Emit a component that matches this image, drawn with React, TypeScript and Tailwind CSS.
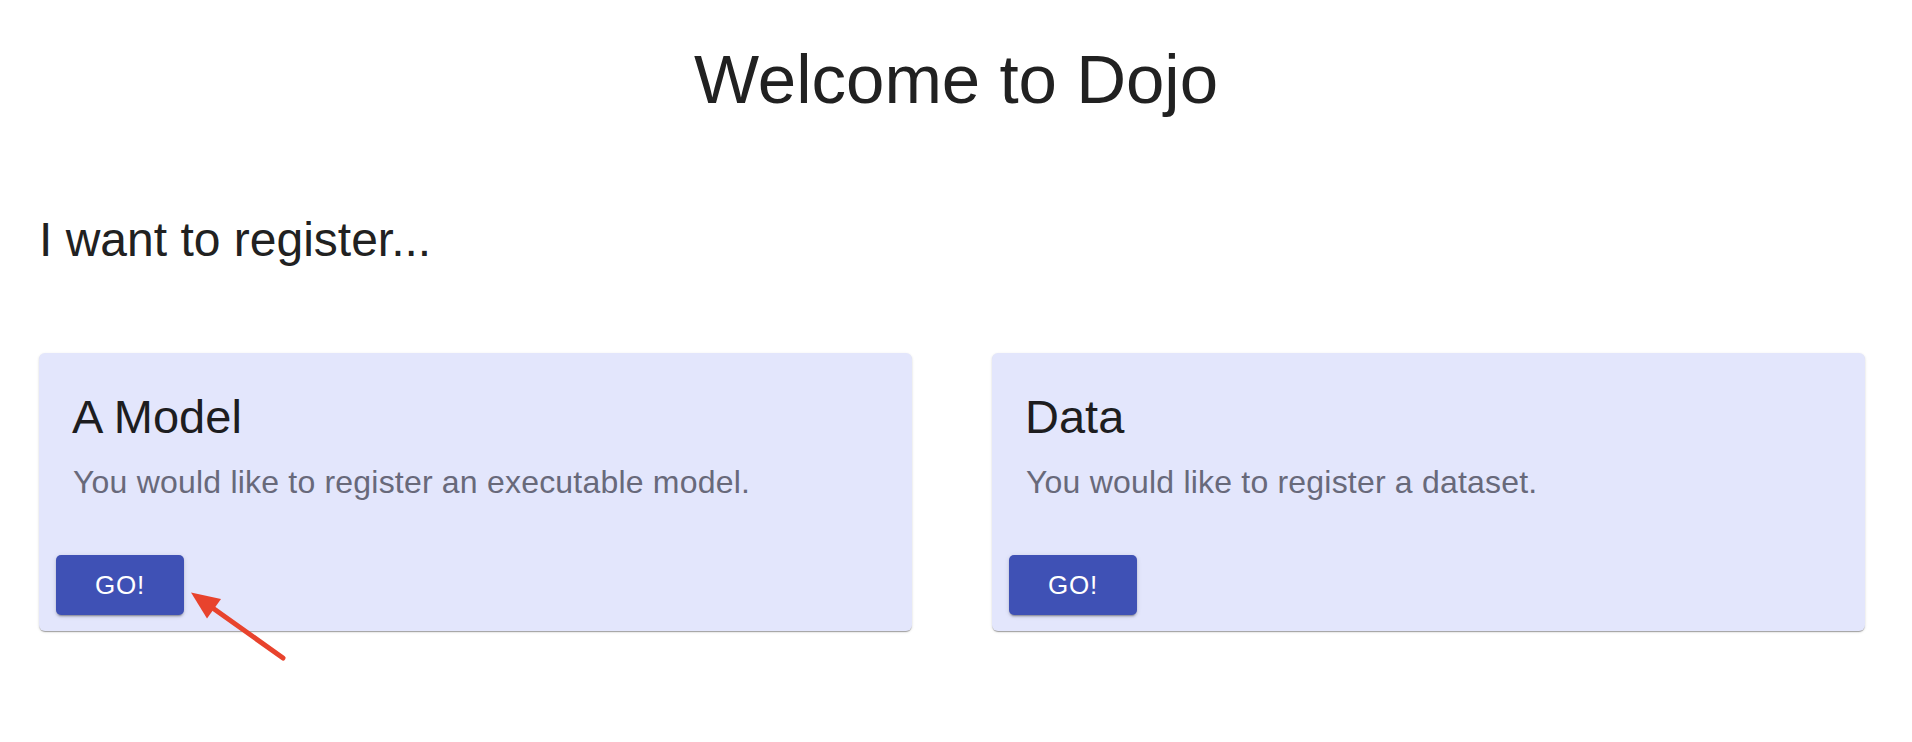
import React from 'react';

const options = [
  { title: 'A Model', text: 'You would like to register an executable model.' },
  { title: 'Data', text: 'You would like to register a dataset.' },
];

const App = () => {
  return (
    <div className="relative w-full h-[742px] bg-white text-[#212121] font-['Liberation_Sans',Arial,sans-serif] overflow-hidden">
      {/* Heading */}
      <h1 className="pt-[45px] text-center text-[69px] leading-[70px] font-normal">Welcome to Dojo</h1>

      <div className="pl-[39px] pr-[47px]">
        <h2 className="mt-[101px] text-[48px] leading-[48px] font-normal">I want to register...</h2>

        {/* Option cards */}
        <div className="mt-[89px] grid grid-cols-2 gap-[80px]">
          {options.map((opt) => (
            <div
              key={opt.title}
              className="h-[278px] flex flex-col bg-[#e3e6fc] rounded-[6px] shadow-[0_2px_1px_-1px_rgba(0,0,0,0.2),0_1px_1px_0_rgba(0,0,0,0.14),0_1px_3px_0_rgba(0,0,0,0.12)]"
            >
              <div className="pt-[40px] px-[33px]">
                <h3 className="text-[47px] leading-[47px] font-normal text-[#1d1d1f]">{opt.title}</h3>
                <p className="mt-[26px] ml-[1px] text-[32px] leading-[32px] text-[#68697a] tracking-[0.2px]">{opt.text}</p>
              </div>
              <div className="mt-auto px-[17px] pb-[16px]">
                <button className="w-[128px] h-[60px] flex items-center justify-center rounded-[5px] bg-[#3f51b5] text-white text-[26px] uppercase tracking-[0.7px] shadow-[0_3px_1px_-2px_rgba(0,0,0,0.2),0_2px_2px_0_rgba(0,0,0,0.14),0_1px_5px_0_rgba(0,0,0,0.12)]">
                  GO!
                </button>
              </div>
            </div>
          ))}
        </div>
      </div>

      {/* Annotation arrow */}
      <svg
        className="absolute left-[185px] top-[585px] pointer-events-none"
        width="105"
        height="80"
        viewBox="0 0 105 80"
      >
        <line x1="98" y1="73" x2="27" y2="22.5" stroke="#e8432d" strokeWidth="5" strokeLinecap="round" />
        <polygon points="6,7.5 36,14 22,33.5" fill="#e8432d" />
      </svg>
    </div>
  );
};

export default App;
